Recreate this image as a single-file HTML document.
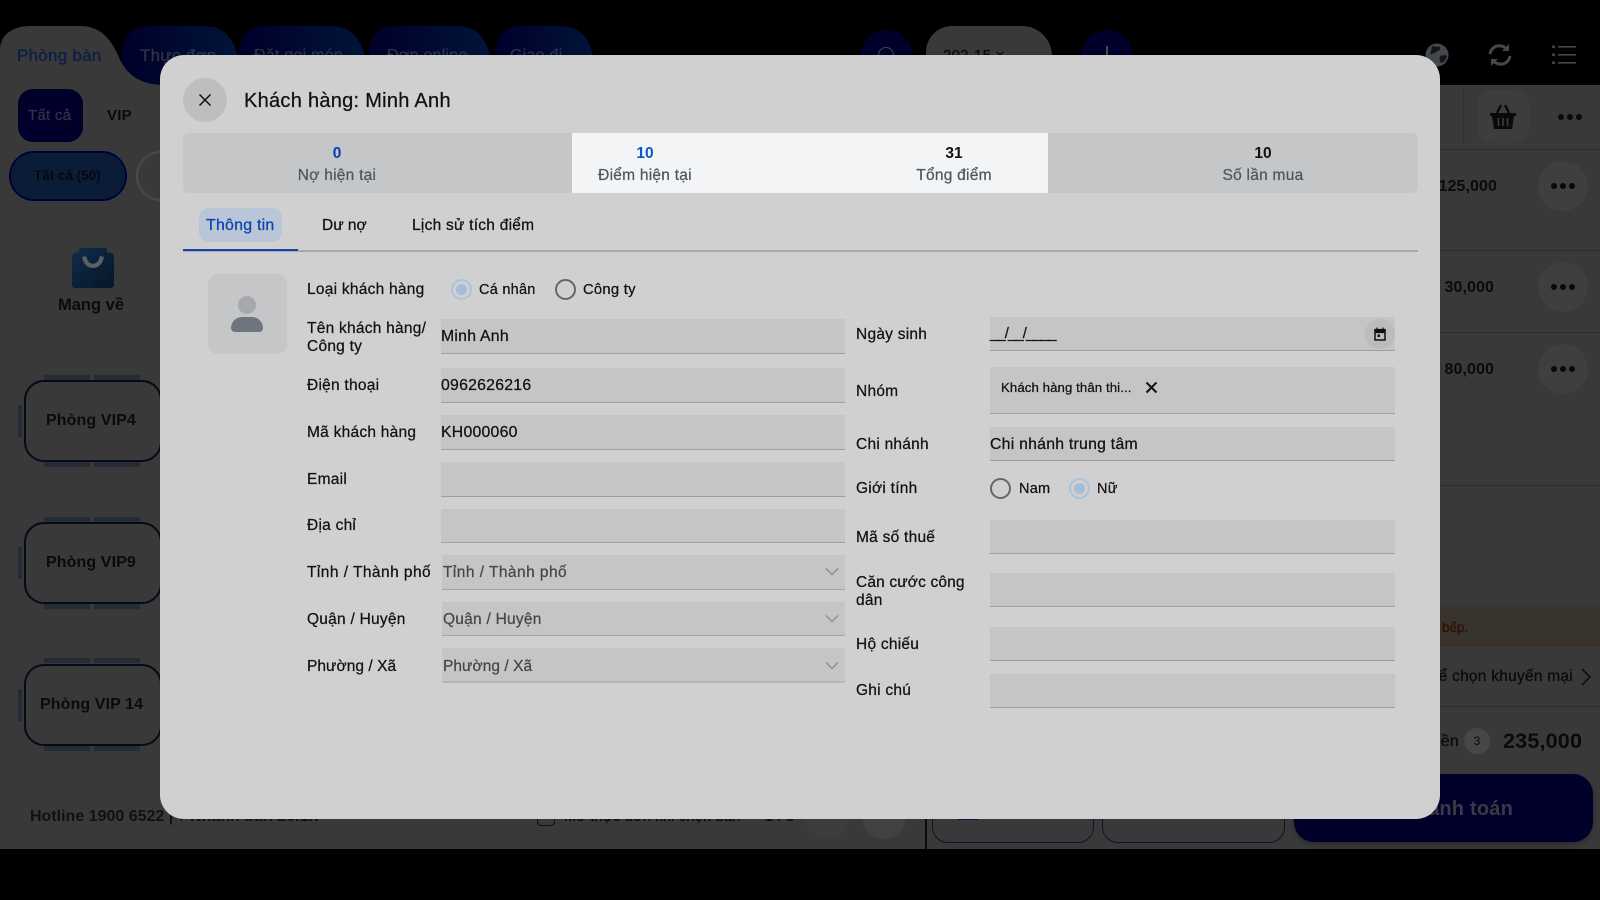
<!DOCTYPE html>
<html lang="vi"><head><meta charset="utf-8"><title>Khách hàng</title>
<style>
*{box-sizing:border-box}
html,body{margin:0;padding:0;width:1600px;height:900px;overflow:hidden;background:#000;font-family:"Liberation Sans",sans-serif}
.a{position:absolute}
.t{position:absolute;margin-top:1px;height:20px;line-height:20px;white-space:nowrap;font-size:15.5px;letter-spacing:.25px;color:#111;-webkit-text-stroke:.25px currentColor}
.l{color:#121212}
.b{font-weight:700;-webkit-text-stroke:0}
.v{font-size:15.8px}
.f{position:absolute;background:#c5c5c5;border-bottom:1.5px solid #9f9f9f}
.s{position:absolute;background:#c5c5c5;border-bottom:1.5px solid #a6a6a6;left:442px;width:403px;height:34.5px}
.sel{color:#44474c}
.r{position:absolute;width:21px;height:21px;border-radius:50%;border:2px solid #62676e}
.r.on{border:2px solid #a9c3dd}
.r.on:after{content:"";position:absolute;left:3px;top:3px;width:11px;height:11px;border-radius:50%;background:#a6bdd6}
.ch{position:absolute;background:#262c36}
.room{position:absolute;left:23.5px;width:138px;height:82px;border:2px solid #050a18;border-radius:20px}
.rn{font-size:16px;color:#0a0a0a;letter-spacing:.1px}
.dots{position:absolute;width:6px;height:6px;border-radius:50%;background:#0a0a0a;box-shadow:9px 0 0 #0a0a0a,18px 0 0 #0a0a0a}
.rt{font-size:16px;color:#0a0a0a;letter-spacing:.1px}
</style></head>
<body>
<div class="a" style="left:0;top:85px;width:1600px;height:764px;background:#393939"></div>

<svg class="a" style="left:0;top:0" width="620" height="90">
<defs><linearGradient id="g" x1="0" x2="1"><stop offset="0" stop-color="#00002a"/><stop offset="1" stop-color="#00143a"/></linearGradient></defs>
<path d="M122 85V50C124 34 134 26 150 26H203C226 26 234 40 239 60V85Z" fill="url(#g)"/>
<path d="M239 85V50C241 34 250 26 267 26H330C353 26 361 40 366 60V85Z" fill="url(#g)"/>
<path d="M369 85V50C371 34 380 26 397 26H456C479 26 487 40 491 60V85Z" fill="url(#g)"/>
<path d="M495 85V50C497 34 506 26 523 26H559C582 26 590 40 594 60V85Z" fill="url(#g)"/>
<path d="M0 90V50C0 34 14 26 30 26H80C100 26 110 38 118 55C126 75 140 85 165 85V90Z" fill="#393939"/>
</svg>
<div class="t" style="left:140px;top:45px;color:#2f3444;font-size:17px">Thực đơn</div>
<div class="t" style="left:17px;top:45px;color:#0a1c4a;font-size:17px">Phòng bàn</div>
<div class="t" style="left:254px;top:45px;color:#2f3444;font-size:16px">Đặt gọi món</div>
<div class="t" style="left:387px;top:45px;color:#2f3444;font-size:16px">Đơn online</div>
<div class="t" style="left:510px;top:45px;color:#2f3444;font-size:16px">Giao đi</div>

<div class="a" style="left:861px;top:30px;width:52px;height:52px;border-radius:50%;background:#00002a"></div>
<div class="a" style="left:878px;top:47px;width:16px;height:16px;border-radius:50%;border:1.5px solid #4a4a4a"></div>
<div class="a" style="left:926px;top:26px;width:126px;height:60px;background:#393939;border-radius:26px 30px 0 0"></div>
<div class="t" style="left:943px;top:45px;font-size:15px;color:#0a0a0a">202-15 ×</div>
<div class="a" style="left:1081px;top:30px;width:52px;height:52px;border-radius:50%;background:#00002a"></div>
<div class="a" style="left:1106px;top:46px;width:1.5px;height:20px;background:#4a4a4a"></div>

<!-- top right icons -->
<svg class="a" style="left:1424px;top:42px" width="26" height="26" viewBox="0 0 26 26"><circle cx="13" cy="13" r="11.5" fill="#44484e"/><path d="M8 4c3 1 6 0 8 1 1 3-2 4-4 5-2 2-5 1-6 4M16 14c3-1 6-1 7 0-1 4-3 6-6 7-1-2-2-4-1-7Z" fill="#141414"/></svg>
<svg class="a" style="left:1487px;top:43px" width="26" height="24" viewBox="0 0 26 24" fill="none" stroke="#44484e" stroke-width="3"><path d="M3 11C4 5 9 2 14 3c3 .5 5 2 6 4"/><path d="M23 13c-1 6-6 9-11 8-3-.5-5-2-6-4"/><path d="M22 1v7h-7M4 23v-7h7" fill="#44484e" stroke="none"/></svg>
<svg class="a" style="left:1552px;top:45px" width="24" height="20" viewBox="0 0 24 20"><g fill="#44484e"><rect x="6" y="1" width="18" height="1.6"/><rect x="6" y="9" width="18" height="1.6"/><rect x="6" y="17" width="18" height="1.6"/><circle cx="1.5" cy="1.8" r="1.5"/><circle cx="1.5" cy="9.8" r="1.5"/><circle cx="1.5" cy="17.8" r="1.5"/></g></svg>

<!-- left bg -->
<div class="a" style="left:18px;top:89px;width:65px;height:53px;border-radius:15px;background:#00002a"></div>
<div class="t" style="left:28px;top:105px;color:#30324a;font-size:15px">Tất cả</div>
<div class="t b" style="left:107px;top:105px;color:#0a0a0a;font-size:15px">VIP</div>
<div class="a" style="left:9px;top:151px;width:118px;height:50px;border-radius:25px;background:#0a1c38;border:2.5px solid #00003c"></div>
<div class="t b" style="left:34px;top:165px;font-size:13.5px;color:#07070f;letter-spacing:0">Tất cả (50)</div>
<div class="a" style="left:136px;top:151px;width:60px;height:50px;border-radius:25px;border:2px solid #4a4a4a"></div>

<svg class="a" style="left:71px;top:247px" width="44" height="42" viewBox="0 0 46 42"><defs><linearGradient id="bag" x1="0" x2="1" y1="0" y2="1"><stop offset="0" stop-color="#0f2c4c"/><stop offset="1" stop-color="#071526"/></linearGradient></defs><path d="M9 0H37L38 5H41C44 5 45 8 45 10V38C45 41 43 42 41 42H5C2 42 1 40 1 38V10C1 7 3 5 5 5H8Z" fill="url(#bag)"/><path d="M14 9C15 22 31 22 32 9" fill="none" stroke="#5e6064" stroke-width="4.5"/></svg>
<div class="t b" style="left:58px;top:294px;font-size:16.5px;color:#0a0a0a;letter-spacing:0">Mang về</div>

<div class="ch" style="left:44px;top:375px;width:46px;height:5px"></div><div class="ch" style="left:94px;top:375px;width:46px;height:5px"></div><div class="ch" style="left:44px;top:462px;width:46px;height:5px"></div><div class="ch" style="left:94px;top:462px;width:46px;height:5px"></div><div class="ch" style="left:18px;top:405px;width:4px;height:32px"></div>
<div class="room" style="top:380px"></div>
<div class="t b rn" style="left:46px;top:410px">Phòng VIP4</div>
<div class="ch" style="left:44px;top:517px;width:46px;height:5px"></div><div class="ch" style="left:94px;top:517px;width:46px;height:5px"></div><div class="ch" style="left:44px;top:604px;width:46px;height:5px"></div><div class="ch" style="left:94px;top:604px;width:46px;height:5px"></div><div class="ch" style="left:18px;top:547px;width:4px;height:32px"></div>
<div class="room" style="top:522px"></div>
<div class="t b rn" style="left:46px;top:552px">Phòng VIP9</div>
<div class="ch" style="left:44px;top:658px;width:46px;height:5px"></div><div class="ch" style="left:94px;top:658px;width:46px;height:5px"></div><div class="ch" style="left:44px;top:746px;width:46px;height:5px"></div><div class="ch" style="left:94px;top:746px;width:46px;height:5px"></div><div class="ch" style="left:18px;top:689px;width:4px;height:32px"></div>
<div class="room" style="top:664px"></div>
<div class="t b rn" style="left:40px;top:694px">Phòng VIP 14</div>

<div class="t b" style="left:30px;top:806px;font-size:16px;letter-spacing:0">Hotline 1900 6522 | ▾ Nhánh bàn 26.1.7</div>
<div class="a" style="left:537px;top:806px;width:18px;height:20px;border:1.5px solid #111;border-radius:4px"></div>
<div class="t" style="left:564px;top:806px;font-size:14.5px;color:#0a0a0a">Mở thực đơn khi chọn bàn</div>
<div class="t b" style="left:765px;top:806px;font-size:14.5px;color:#050b2c">1 / 8</div>
<div class="a" style="left:805px;top:795px;width:44px;height:44px;border-radius:50%;background:#3d3d3d"></div>
<div class="a" style="left:862px;top:795px;width:44px;height:44px;border-radius:50%;background:#424242"></div>
<div class="a" style="left:925px;top:800px;width:1.5px;height:49px;background:#0a0a0a"></div>
<div class="a" style="left:932px;top:790px;width:162px;height:53px;border:1px solid #081434;border-radius:16px"></div>
<div class="a" style="left:1102px;top:790px;width:183px;height:53px;border:1px solid #081434;border-radius:16px"></div>
<div class="a" style="left:958px;top:810px;width:20px;height:10px;border-bottom:2px solid #07124e"></div>
<div class="a" style="left:1294px;top:774px;width:299px;height:68px;background:#00002a;border-radius:20px;box-shadow:0 2px 4px rgba(0,0,0,.3)"></div>
<div class="t b" style="right:87px;top:798px;font-size:20px;color:#3a3a44;letter-spacing:.2px">Thanh toán</div>

<!-- right bg -->
<div class="a" style="left:1463px;top:90px;width:1px;height:54px;background:#2e2e2e"></div>
<div class="a" style="left:1477px;top:90px;width:52px;height:53px;border-radius:14px;background:#3d3d3d"></div>
<svg class="a" style="left:1489px;top:104px" width="28" height="26" viewBox="0 0 28 26"><path d="M8 9 12 1M20 9 16 1" stroke="#0a0a0a" stroke-width="2.5" fill="none"/><path d="M1 9H27V12H25L23 25H5L3 12H1Z" fill="#0a0a0a"/><path d="M9.5 14V22M14 14V22M18.5 14V22" stroke="#3d3d3d" stroke-width="1.6"/></svg>
<div class="dots" style="left:1558px;top:114px"></div>
<div class="a" style="left:1440px;top:149px;width:160px;height:1px;background:#2c2c2c"></div>
<div class="t b rt" style="right:103px;top:176px">125,000</div>
<div class="a" style="left:1538px;top:161px;width:50px;height:50px;border-radius:50%;background:#3f3f3f"></div>
<div class="dots" style="left:1551px;top:183px"></div>
<div class="a" style="left:1440px;top:250px;width:160px;height:1px;background:#2c2c2c"></div>
<div class="t b rt" style="right:106px;top:277px">30,000</div>
<div class="a" style="left:1538px;top:262px;width:50px;height:50px;border-radius:50%;background:#3f3f3f"></div>
<div class="dots" style="left:1551px;top:284px"></div>
<div class="a" style="left:1440px;top:332px;width:160px;height:1px;background:#2c2c2c"></div>
<div class="t b rt" style="right:106px;top:359px">80,000</div>
<div class="a" style="left:1538px;top:344px;width:50px;height:50px;border-radius:50%;background:#3f3f3f"></div>
<div class="dots" style="left:1551px;top:366px"></div>
<div class="a" style="left:1440px;top:485px;width:160px;height:1px;background:#2c2c2c"></div>
<div class="a" style="left:1440px;top:607px;width:160px;height:41px;background:#38332c;border-bottom:1px solid #463a28"></div>
<div class="t" style="left:1442px;top:617px;font-size:13.5px;color:#2e1003;letter-spacing:0">bếp.</div>
<div class="a" style="left:1440px;top:706px;width:160px;height:1px;background:#2c2c2c"></div>
<div class="t" style="right:27px;top:666px;font-size:15.5px;color:#0a0a0a">Chọn để chọn khuyến mại</div>
<svg class="a" style="left:1580px;top:667px" width="12" height="20" viewBox="0 0 12 20"><path d="M2 2 10 10 2 18" fill="none" stroke="#0f0f0f" stroke-width="1.6"/></svg>
<div class="t" style="right:141px;top:731px;font-size:16px;color:#0a0a0a">Tổng tiền</div>
<div class="a" style="left:1464px;top:728px;width:26px;height:26px;border-radius:50%;background:#474747;color:#0a0a0a;font-size:12px;line-height:26px;text-align:center">3</div>
<div class="t b" style="left:1503px;top:730px;font-size:21.5px;color:#0a0a0a;letter-spacing:.2px">235,000</div>

<!-- modal -->
<div class="a" style="left:160px;top:55px;width:1280px;height:764px;background:#d0d0d0;border-radius:24px"></div>
<div class="a" style="left:183px;top:78px;width:44px;height:44px;border-radius:50%;background:#bebebe"></div>
<svg class="a" style="left:198px;top:93px" width="14" height="14" viewBox="0 0 14 14"><path d="M1.5 1.5 12.5 12.5M12.5 1.5 1.5 12.5" stroke="#111" stroke-width="1.5"/></svg>
<div class="t" style="left:244px;top:90px;font-size:20px;letter-spacing:.28px;color:#111">Khách hàng: Minh Anh</div>

<div class="a" style="left:183px;top:133px;width:1235px;height:60px;background:#c5c6c8;border-radius:6px"></div>
<div class="a" style="left:572px;top:133px;width:476px;height:60px;background:#f3f4f6"></div>
<div class="t b" style="left:287px;width:100px;top:143px;text-align:center;color:#0b3cb0;font-size:15.5px;letter-spacing:0">0</div>
<div class="t" style="left:267px;width:140px;top:165px;text-align:center;color:#50565f">Nợ hiện tại</div>
<div class="t b" style="left:595px;width:100px;top:143px;text-align:center;color:#0b56c4;font-size:15.5px;letter-spacing:0">10</div>
<div class="t" style="left:575px;width:140px;top:165px;text-align:center;color:#50565f">Điểm hiện tại</div>
<div class="t b" style="left:904px;width:100px;top:143px;text-align:center;color:#111;font-size:15.5px;letter-spacing:0">31</div>
<div class="t" style="left:884px;width:140px;top:165px;text-align:center;color:#50565f">Tổng điểm</div>
<div class="t b" style="left:1213px;width:100px;top:143px;text-align:center;color:#111;font-size:15.5px;letter-spacing:0">10</div>
<div class="t" style="left:1193px;width:140px;top:165px;text-align:center;color:#50565f">Số lần mua</div>

<div class="a" style="left:199px;top:208px;width:83px;height:34px;border-radius:10px;background:#b9c6d8"></div>
<div class="t" style="left:206px;top:215px;color:#0c40ac;font-size:15.9px">Thông tin</div>
<div class="t" style="left:322px;top:215px;color:#111;letter-spacing:0">Dư nợ</div>
<div class="t" style="left:412px;top:215px;color:#111">Lịch sử tích điểm</div>
<div class="a" style="left:183px;top:250px;width:1235px;height:1.5px;background:#a9a9a9"></div>
<div class="a" style="left:183px;top:248.5px;width:115px;height:2.5px;background:#1a3fae"></div>

<div class="a" style="left:208px;top:274px;width:79px;height:80px;border-radius:10px;background:#c5c6c8"></div>
<div class="a" style="left:238px;top:296px;width:18px;height:18px;border-radius:50%;background:#a6a8ad"></div>
<div class="a" style="left:231px;top:317px;width:32px;height:15px;border-radius:14px 14px 5px 5px;background:#6e757f"></div>

<!-- left column -->
<div class="t l" style="left:307px;top:279px">Loại khách hàng</div>
<div class="r on" style="left:451px;top:279px"></div><div class="t" style="left:479px;top:279px;font-size:14.5px">Cá nhân</div>
<div class="r" style="left:554.5px;top:279px"></div><div class="t" style="left:583px;top:279px;font-size:14.8px">Công ty</div>

<div class="t l" style="left:307px;top:318px">Tên khách hàng/</div>
<div class="t l" style="left:307px;top:336px">Công ty</div>
<div class="f" style="left:441px;top:319px;width:404px;height:34.5px"></div><div class="t v" style="left:441px;top:326px">Minh Anh</div>
<div class="t l" style="left:307px;top:375px">Điện thoại</div>
<div class="f" style="left:441px;top:368px;width:404px;height:34.5px"></div><div class="t v" style="left:441px;top:375px">0962626216</div>
<div class="t l" style="left:307px;top:422px">Mã khách hàng</div>
<div class="f" style="left:441px;top:415px;width:404px;height:34.5px"></div><div class="t v" style="left:441px;top:422px">KH000060</div>
<div class="t l" style="left:307px;top:469px">Email</div>
<div class="f" style="left:441px;top:462px;width:404px;height:34.5px"></div>
<div class="t l" style="left:307px;top:515px">Địa chỉ</div>
<div class="f" style="left:441px;top:508.5px;width:404px;height:34.5px"></div>

<div class="t l" style="left:307px;top:562px;letter-spacing:.45px">Tỉnh / Thành phố</div>
<div class="s" style="top:555px"></div><div class="t sel" style="left:443px;top:562px;letter-spacing:.45px">Tỉnh / Thành phố</div>
<div class="t l" style="left:307px;top:609px">Quận / Huyện</div>
<div class="s" style="top:601.5px"></div><div class="t sel" style="left:443px;top:609px">Quận / Huyện</div>
<div class="t l" style="left:307px;top:655.5px;letter-spacing:.05px">Phường / Xã</div>
<div class="s" style="top:648px;border-bottom-width:2px;border-bottom-color:#b6b6b6"></div><div class="t sel" style="left:443px;top:655.5px;letter-spacing:.05px">Phường / Xã</div>
<svg class="a" style="left:825px;top:567px" width="14" height="9" viewBox="0 0 14 9"><path d="M1 1.5 7 7.5 13 1.5" fill="none" stroke="#8e8e8e" stroke-width="1.5"/></svg>
<svg class="a" style="left:825px;top:614px" width="14" height="9" viewBox="0 0 14 9"><path d="M1 1.5 7 7.5 13 1.5" fill="none" stroke="#8e8e8e" stroke-width="1.5"/></svg>
<svg class="a" style="left:825px;top:661px" width="14" height="9" viewBox="0 0 14 9"><path d="M1 1.5 7 7.5 13 1.5" fill="none" stroke="#8e8e8e" stroke-width="1.5"/></svg>

<!-- right column -->
<div class="t l" style="left:856px;top:324px">Ngày sinh</div>
<div class="f" style="left:990px;top:317px;width:405px;height:34px"></div>
<div class="t" style="left:990px;top:323px;letter-spacing:-.95px;font-size:15px">__/__/____</div>
<div class="a" style="left:1365px;top:319px;width:30px;height:30px;border-radius:50%;background:#bbb"></div>
<svg class="a" style="left:1374px;top:327px" width="12" height="14" viewBox="0 0 12 14"><path d="M1 3H11V13H1Z" fill="none" stroke="#111" stroke-width="1.5"/><path d="M1 2.5H11V5.5H1ZM3 0.5V3M9 0.5V3" stroke="#111" stroke-width="1.2" fill="#111"/><rect x="3.5" y="7.5" width="2.5" height="2.5" fill="#111"/></svg>
<div class="t l" style="left:856px;top:381px">Nhóm</div>
<div class="f" style="left:990px;top:367px;width:405px;height:47px"></div>
<div class="t" style="left:1001px;top:377px;font-size:13.2px;letter-spacing:.1px">Khách hàng thân thi...</div>
<svg class="a" style="left:1145px;top:381px" width="13" height="13" viewBox="0 0 13 13"><path d="M1.5 1.5 11.5 11.5M11.5 1.5 1.5 11.5" stroke="#111" stroke-width="2"/></svg>
<div class="t l" style="left:856px;top:434px">Chi nhánh</div>
<div class="f" style="left:990px;top:427px;width:405px;height:34px"></div>
<div class="t v" style="left:990px;top:434px">Chi nhánh trung tâm</div>
<div class="t l" style="left:856px;top:478px">Giới tính</div>
<div class="r" style="left:990px;top:478px"></div><div class="t" style="left:1019px;top:478px;font-size:14.5px">Nam</div>
<div class="r on" style="left:1068.5px;top:478px"></div><div class="t" style="left:1097px;top:478px;font-size:14.5px">Nữ</div>
<div class="t l" style="left:856px;top:527px">Mã số thuế</div>
<div class="f" style="left:990px;top:520px;width:405px;height:34px"></div>
<div class="t l" style="left:856px;top:572px;letter-spacing:.15px">Căn cước công</div>
<div class="t l" style="left:856px;top:590px">dân</div>
<div class="f" style="left:990px;top:573px;width:405px;height:34px"></div>
<div class="t l" style="left:856px;top:634px">Hộ chiếu</div>
<div class="f" style="left:990px;top:627px;width:405px;height:34px"></div>
<div class="t l" style="left:856px;top:680px">Ghi chú</div>
<div class="f" style="left:990px;top:673.5px;width:405px;height:34.5px"></div>
</body></html>
